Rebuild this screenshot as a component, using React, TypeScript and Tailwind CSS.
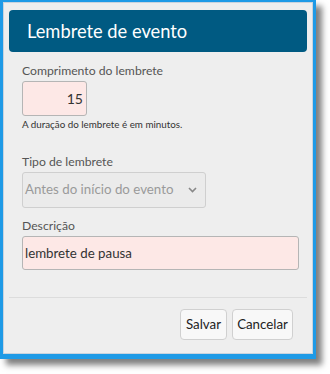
export default function App() {
  return (
    <div className="w-[330px] h-[374px] bg-white font-['Lato',sans-serif]">
      <div className="w-[316px] h-[359px] border-t-2 border-l-[3px] border-r-[3px] border-b-[5px] border-[#1e9ae6] shadow-[6px_6px_6px_rgba(0,0,0,0.5)]">
        <div className="h-full bg-[#eeeeee] border border-[#c9d3dd] px-[5px] pt-[7px] flex flex-col">
          <div className="h-[42px] bg-[#005a82] rounded-[4px] flex items-center pl-[18px]">
            <h1 className="text-white text-[18.3px] leading-none">Lembrete de evento</h1>
          </div>
          <div className="px-[13px] pt-[10px] flex flex-col">
            <label className="text-[12.2px] text-[#555] leading-[18px]">Comprimento do lembrete</label>
            <input
              defaultValue="15"
              className="mt-[1px] w-[65px] h-[35px] bg-[#fde8e6] border border-[#b5b5b5] rounded-[3px] text-right pr-[3px] text-[14px] text-[#333] outline-none"
            />
            <p className="text-[9.8px] text-[#333] leading-[14px] mt-[1px]">A duração do lembrete é em minutos.</p>
            <label className="text-[12.2px] text-[#555] leading-[18px] mt-[22px]">Tipo de lembrete</label>
            <div className="mt-[1px] w-[184px] h-[36px] bg-[#ebebeb] border border-[#cfcfcf] rounded-[3px] flex items-center justify-between pl-[2px] pr-[8px]">
              <span className="text-[13.3px] text-[#9a9a9a]">Antes do início do evento</span>
              <svg width="9" height="6" viewBox="0 0 9 6" fill="none" stroke="#888" strokeWidth="1.6">
                <path d="M1 1l3.5 3.5L8 1" />
              </svg>
            </div>
            <label className="text-[12.2px] text-[#555] leading-[18px] mt-[9px]">Descrição</label>
            <input
              defaultValue="lembrete de pausa"
              className="mt-[1px] w-[277px] h-[34px] bg-[#fde8e6] border border-[#b5b5b5] rounded-[3px] pl-[2px] text-[13.3px] text-[#333] outline-none"
            />
          </div>
          <div className="mt-[27px] border-t border-[#dcdcdc] flex justify-end gap-[5px] pr-[14px] pt-[11px]">
            <button className="w-[47px] h-[31px] bg-[#f8f8f8] border border-[#d0d0d0] rounded-[4px] text-[13.3px] text-[#222]">Salvar</button>
            <button className="w-[61px] h-[31px] bg-[#f8f8f8] border border-[#d0d0d0] rounded-[4px] text-[13.3px] text-[#222]">Cancelar</button>
          </div>
        </div>
      </div>
    </div>
  );
}
